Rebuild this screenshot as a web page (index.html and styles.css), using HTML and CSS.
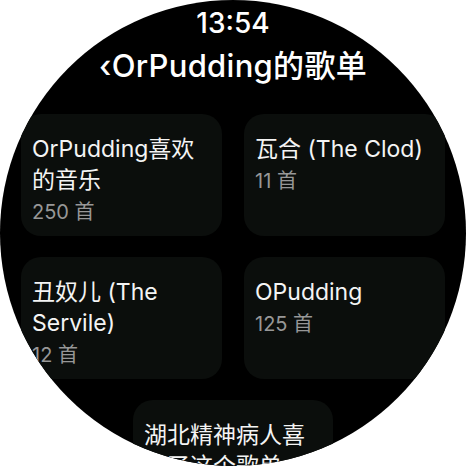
FILE: index.html
```html
<!DOCTYPE html>
<html lang="zh-CN">
<head>
<meta charset="utf-8">
<title>OrPudding的歌单</title>
<link rel="stylesheet" href="styles.css">
</head>
<body>
<div class="watch">
  <header class="head">
    <div class="time">13:54</div>
    <div class="title">‹OrPudding的歌单</div>
  </header>
  <main class="grid">
    <div class="card">
      <div class="name">OrPudding喜欢的音乐</div>
      <div class="count">250 首</div>
    </div>
    <div class="card">
      <div class="name">瓦合 (The Clod)</div>
      <div class="count">11 首</div>
    </div>
    <div class="card">
      <div class="name">丑奴儿 (The Servile)</div>
      <div class="count">12 首</div>
    </div>
    <div class="card">
      <div class="name">OPudding</div>
      <div class="count">125 首</div>
    </div>
    <div class="card wide">
      <div class="name">湖北精神病人喜欢了这个歌单</div>
      <div class="count">8 首</div>
    </div>
  </main>
</div>
</body>
</html>
```

FILE: styles.css
```css
html, body {
  margin: 0;
  padding: 0;
  background: #fff;
}
.watch {
  width: 466px;
  height: 466px;
  border-radius: 50%;
  background: #000;
  overflow: hidden;
  color: #fff;
  font-family: Inter, "Noto Sans CJK SC", sans-serif;
}
.head {
  display: flex;
  flex-direction: column;
  align-items: center;
  padding-top: 6px;
}
.time {
  font-size: 28px;
  font-weight: 500;
  line-height: 34px;
}
.title {
  font-size: 31px;
  font-weight: 500;
  letter-spacing: 0.3px;
  line-height: 40px;
  margin-top: 6px;
}
.grid {
  display: grid;
  grid-template-columns: 201px 201px;
  column-gap: 22px;
  row-gap: 21px;
  padding: 0 21px;
  margin-top: 28px;
}
.card {
  background: #0b0e0c;
  border-radius: 20px;
  height: 122px;
  box-sizing: border-box;
  padding: 20px 12px 0 11px;
}
.card.wide {
  grid-column: 1 / span 2;
  justify-self: center;
  width: 200px;
}
.name {
  font-size: 23px;
  line-height: 31px;
  color: #f4f4f4;
}
.count {
  font-size: 20px;
  line-height: 24px;
  margin-top: 4px;
  color: #979797;
}
```
